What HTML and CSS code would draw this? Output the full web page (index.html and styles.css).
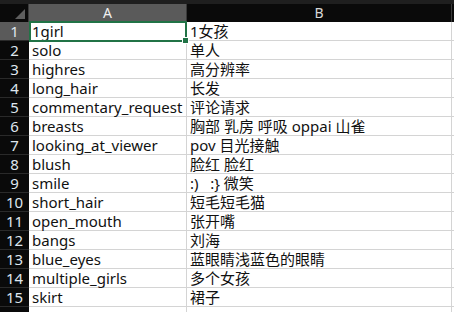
FILE: index.html
```html
<!DOCTYPE html>
<html>
  <head>
    <title>Sheet1</title>
    <link rel="stylesheet" href="styles.css">
  </head>
  <body>
    <div class="topbar"></div>
    <div class="sheet">
      <div class="corner"><span class="tri"></span></div>
      <div class="colhead active">A</div>
      <div class="colhead">B</div>
      <div class="colhead"></div>

      <div class="rowhead active">1</div>
      <div class="cell selected">1girl</div>
      <div class="cell">1女孩</div>
      <div class="cell"></div>

      <div class="rowhead">2</div>
      <div class="cell">solo</div>
      <div class="cell">单人</div>
      <div class="cell"></div>

      <div class="rowhead">3</div>
      <div class="cell">highres</div>
      <div class="cell">高分辨率</div>
      <div class="cell"></div>

      <div class="rowhead">4</div>
      <div class="cell">long_hair</div>
      <div class="cell">长发</div>
      <div class="cell"></div>

      <div class="rowhead">5</div>
      <div class="cell">commentary_request</div>
      <div class="cell">评论请求</div>
      <div class="cell"></div>

      <div class="rowhead">6</div>
      <div class="cell">breasts</div>
      <div class="cell">胸部 乳房 呼吸 oppai 山雀</div>
      <div class="cell"></div>

      <div class="rowhead">7</div>
      <div class="cell">looking_at_viewer</div>
      <div class="cell">pov 目光接触</div>
      <div class="cell"></div>

      <div class="rowhead">8</div>
      <div class="cell">blush</div>
      <div class="cell">脸红 脸红</div>
      <div class="cell"></div>

      <div class="rowhead">9</div>
      <div class="cell">smile</div>
      <div class="cell">:)&nbsp;&nbsp;&nbsp;:} 微笑</div>
      <div class="cell"></div>

      <div class="rowhead">10</div>
      <div class="cell">short_hair</div>
      <div class="cell">短毛短毛猫</div>
      <div class="cell"></div>

      <div class="rowhead">11</div>
      <div class="cell">open_mouth</div>
      <div class="cell">张开嘴</div>
      <div class="cell"></div>

      <div class="rowhead">12</div>
      <div class="cell">bangs</div>
      <div class="cell">刘海</div>
      <div class="cell"></div>

      <div class="rowhead">13</div>
      <div class="cell">blue_eyes</div>
      <div class="cell">蓝眼睛浅蓝色的眼睛</div>
      <div class="cell"></div>

      <div class="rowhead">14</div>
      <div class="cell">multiple_girls</div>
      <div class="cell">多个女孩</div>
      <div class="cell"></div>

      <div class="rowhead">15</div>
      <div class="cell">skirt</div>
      <div class="cell">裙子</div>
      <div class="cell"></div>

      <div class="rowhead"></div>
      <div class="cell"></div>
      <div class="cell"></div>
      <div class="cell"></div>
    </div>
  </body>
</html>
```

FILE: styles.css
```css
body {
  margin: 0;
  background-color: #fff;
  font-family: "Noto Sans", "Noto Sans CJK SC", sans-serif;
  overflow: hidden;
}

.topbar {
  height: 4px;
  background-color: #1f1f1f;
}

.sheet {
  display: grid;
  grid-template-columns: 29px 158px 265px 20px;
  grid-template-rows: 18px;
  grid-auto-rows: 19px;
}

.corner {
  background-color: #0a0a0a;
  border-right: 1px solid #3a3a3a;
  position: relative;
}

.corner .tri {
  position: absolute;
  right: 3px;
  bottom: 3px;
  width: 0;
  height: 0;
  border-left: 10px solid transparent;
  border-bottom: 10px solid #5e5e5e;
}

.colhead {
  background-color: #0a0a0a;
  color: #d8d8d8;
  font-size: 14px;
  line-height: 18px;
  text-align: center;
  border-right: 1px solid #3a3a3a;
  box-sizing: border-box;
}

.colhead.active {
  background-color: #5a5a5a;
  color: #f0f0f0;
}

.rowhead {
  background-color: #0a0a0a;
  color: #dfe6ee;
  font-size: 15px;
  line-height: 19px;
  text-align: center;
  border-bottom: 1px solid #2a2a2a;
  box-sizing: border-box;
}

.rowhead.active {
  background-color: #5a5a5a;
}

.cell {
  font-size: 15px;
  line-height: 19px;
  color: #111;
  padding-left: 3px;
  white-space: nowrap;
  border-right: 1px solid #d4d4d4;
  border-bottom: 1px solid #d4d4d4;
  box-sizing: border-box;
}

.cell.selected {
  position: relative;
}

.cell.selected::before {
  content: "";
  position: absolute;
  top: -1px;
  left: 0;
  right: -1px;
  bottom: -2px;
  border: 2px solid #217346;
}

.cell.selected::after {
  content: "";
  position: absolute;
  right: -3px;
  bottom: -4px;
  width: 5px;
  height: 5px;
  background-color: #217346;
  border: 1px solid #fff;
}
```
